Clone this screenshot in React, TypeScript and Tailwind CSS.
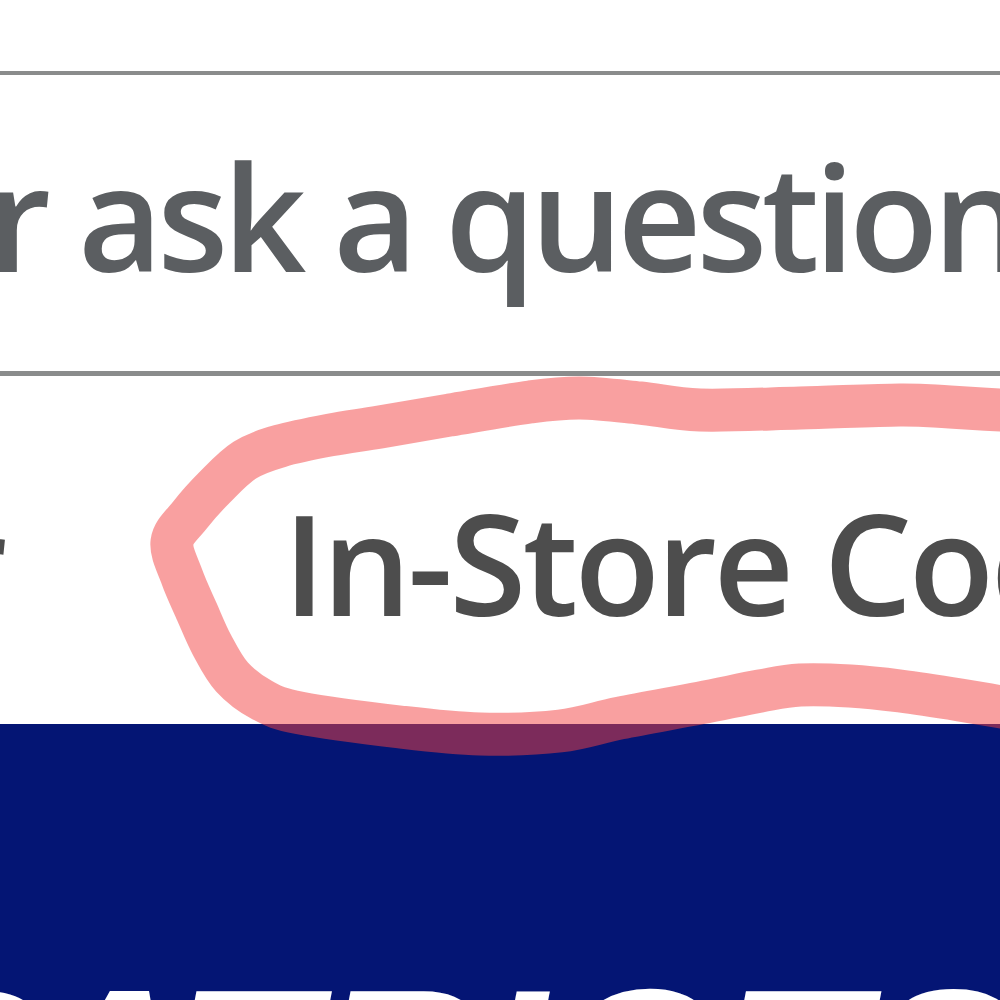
import React from "react";

const annotationPoints: [number, number][] = [
  [1030, 412], [950, 407], [900, 405], [800, 408], [700, 410], [640, 403], [580, 398],
  [530, 402], [450, 415], [380, 427], [330, 435], [280, 446], [245, 460], [215, 487],
  [190, 515], [172, 542], [182, 577], [197, 612], [212, 645], [232, 677], [262, 700],
  [300, 713], [400, 727], [480, 734], [560, 731], [620, 718], [700, 703], [760, 691],
  [800, 685], [850, 686], [900, 691], [960, 700], [1030, 712],
];

function smoothPath(pts: [number, number][]) {
  let d = `M ${pts[0][0]} ${pts[0][1]}`;
  for (let i = 0; i < pts.length - 1; i++) {
    const p0 = pts[i - 1] || pts[i];
    const p1 = pts[i];
    const p2 = pts[i + 1];
    const p3 = pts[i + 2] || p2;
    const c1x = p1[0] + (p2[0] - p0[0]) / 6;
    const c1y = p1[1] + (p2[1] - p0[1]) / 6;
    const c2x = p2[0] - (p3[0] - p1[0]) / 6;
    const c2y = p2[1] - (p3[1] - p1[1]) / 6;
    d += ` C ${c1x} ${c1y} ${c2x} ${c2y} ${p2[0]} ${p2[1]}`;
  }
  return d;
}

export default function App() {
  return (
    <div className="relative w-[1000px] h-[1000px] overflow-hidden bg-white">
      <div className="flex flex-col h-full">
        <div className="h-[71px] bg-white" />
        <div className="h-[4px] bg-[#8a8c8c]" />
        <div className="h-[296px] flex items-start pt-[68px] overflow-hidden">
          <div className="flex whitespace-nowrap text-[146px] leading-none font-semibold text-[#5b5e61] [font-family:'Open_Sans',sans-serif] tracking-[-5.5px]">
            <div className="w-0 flex justify-end">
              <span>Search o</span>
            </div>
            <span className="ml-[-12px]">r ask a question</span>
          </div>
        </div>
        <div className="h-[5px] bg-[#8a8c8c]" />
        <div className="h-[348px] flex items-start pt-[116px] overflow-hidden">
          <div className="flex whitespace-nowrap text-[140px] leading-none font-semibold text-[#4d4d4d] [font-family:'Open_Sans',sans-serif] tracking-[-3.5px]">
            <div className="w-[4px] flex justify-end">
              <span>Reorder</span>
            </div>
            <span className="ml-[279px]">In-Store Code</span>
          </div>
        </div>
        <div className="flex-1 bg-[#041574] overflow-hidden pt-[232px]">
          <div className="whitespace-nowrap text-[230px] leading-none font-black italic text-white [font-family:'Liberation_Sans',sans-serif] ml-[-110px]">
            PATRIOTS
          </div>
        </div>
      </div>
      <svg
        className="absolute inset-0 pointer-events-none"
        width="1000"
        height="1000"
        viewBox="0 0 1000 1000"
      >
        <path
          d={smoothPath(annotationPoints)}
          fill="none"
          stroke="rgb(243,65,65)"
          strokeOpacity={0.5}
          strokeWidth={43}
          strokeLinecap="round"
          strokeLinejoin="round"
        />
      </svg>
    </div>
  );
}
